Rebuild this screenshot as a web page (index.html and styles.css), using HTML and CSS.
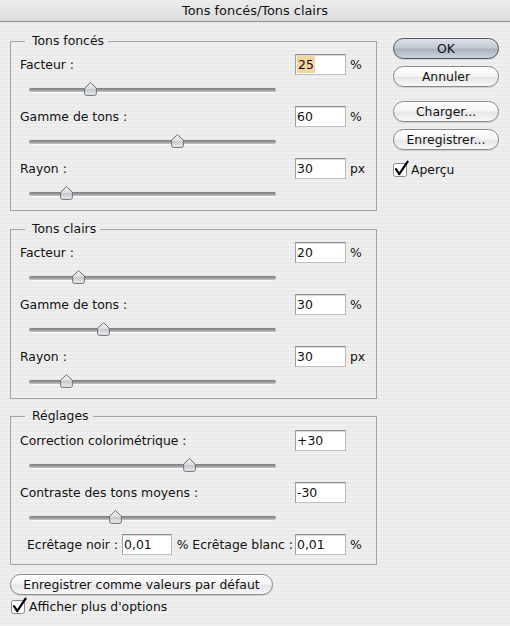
FILE: index.html
```html
<!DOCTYPE html>
<html lang="fr">
<head>
<meta charset="utf-8">
<title>Tons foncés/Tons clairs</title>
<link rel="stylesheet" href="styles.css">
</head>
<body>
<svg class="defs" width="0" height="0" aria-hidden="true">
  <defs>
    <linearGradient id="thumbGrad" x1="0" y1="0" x2="0" y2="1">
      <stop offset="0" stop-color="#fbfbfb"/>
      <stop offset="0.45" stop-color="#dedede"/>
      <stop offset="0.55" stop-color="#c4c9d1"/>
      <stop offset="1" stop-color="#eef0f3"/>
    </linearGradient>
  </defs>
</svg>
<div class="window">
  <div class="titlebar">Tons foncés/Tons clairs</div>
  <div class="content">
    <div class="main">
      <fieldset class="group">
        <legend>Tons foncés</legend>
        <div class="row"><span class="lbl">Facteur :</span><span class="field"><span class="sel">25</span></span><span class="unit">%</span></div>
        <div class="slider"><div class="track"></div><svg class="thumb" style="left:25%" viewBox="0 0 13 14" width="13" height="14"><path d="M6.5 0.7 L12.4 6.2 V11.4 Q12.4 13.4 10.4 13.4 H2.6 Q0.6 13.4 0.6 11.4 V6.2 Z"/></svg></div>
        <div class="row"><span class="lbl">Gamme de tons :</span><span class="field">60</span><span class="unit">%</span></div>
        <div class="slider"><div class="track"></div><svg class="thumb" style="left:60%" viewBox="0 0 13 14" width="13" height="14"><path d="M6.5 0.7 L12.4 6.2 V11.4 Q12.4 13.4 10.4 13.4 H2.6 Q0.6 13.4 0.6 11.4 V6.2 Z"/></svg></div>
        <div class="row"><span class="lbl">Rayon :</span><span class="field">30</span><span class="unit">px</span></div>
        <div class="slider"><div class="track"></div><svg class="thumb" style="left:15%" viewBox="0 0 13 14" width="13" height="14"><path d="M6.5 0.7 L12.4 6.2 V11.4 Q12.4 13.4 10.4 13.4 H2.6 Q0.6 13.4 0.6 11.4 V6.2 Z"/></svg></div>
      </fieldset>

      <fieldset class="group">
        <legend>Tons clairs</legend>
        <div class="row"><span class="lbl">Facteur :</span><span class="field">20</span><span class="unit">%</span></div>
        <div class="slider"><div class="track"></div><svg class="thumb" style="left:20%" viewBox="0 0 13 14" width="13" height="14"><path d="M6.5 0.7 L12.4 6.2 V11.4 Q12.4 13.4 10.4 13.4 H2.6 Q0.6 13.4 0.6 11.4 V6.2 Z"/></svg></div>
        <div class="row"><span class="lbl">Gamme de tons :</span><span class="field">30</span><span class="unit">%</span></div>
        <div class="slider"><div class="track"></div><svg class="thumb" style="left:30%" viewBox="0 0 13 14" width="13" height="14"><path d="M6.5 0.7 L12.4 6.2 V11.4 Q12.4 13.4 10.4 13.4 H2.6 Q0.6 13.4 0.6 11.4 V6.2 Z"/></svg></div>
        <div class="row"><span class="lbl">Rayon :</span><span class="field">30</span><span class="unit">px</span></div>
        <div class="slider"><div class="track"></div><svg class="thumb" style="left:15%" viewBox="0 0 13 14" width="13" height="14"><path d="M6.5 0.7 L12.4 6.2 V11.4 Q12.4 13.4 10.4 13.4 H2.6 Q0.6 13.4 0.6 11.4 V6.2 Z"/></svg></div>
      </fieldset>

      <fieldset class="group group-last">
        <legend>Réglages</legend>
        <div class="row"><span class="lbl">Correction colorimétrique :</span><span class="field">+30</span><span class="unit"></span></div>
        <div class="slider"><div class="track"></div><svg class="thumb" style="left:65%" viewBox="0 0 13 14" width="13" height="14"><path d="M6.5 0.7 L12.4 6.2 V11.4 Q12.4 13.4 10.4 13.4 H2.6 Q0.6 13.4 0.6 11.4 V6.2 Z"/></svg></div>
        <div class="row"><span class="lbl">Contraste des tons moyens :</span><span class="field">-30</span><span class="unit"></span></div>
        <div class="slider"><div class="track"></div><svg class="thumb" style="left:35%" viewBox="0 0 13 14" width="13" height="14"><path d="M6.5 0.7 L12.4 6.2 V11.4 Q12.4 13.4 10.4 13.4 H2.6 Q0.6 13.4 0.6 11.4 V6.2 Z"/></svg></div>
        <div class="cliprow">
          <span class="clip1">Ecrêtage noir :</span>
          <span class="field field-sm">0,01</span>
          <span class="clip2">% Ecrêtage blanc :</span>
          <span class="field">0,01</span>
          <span class="unit">%</span>
        </div>
      </fieldset>

      <div class="btn btn-wide">Enregistrer comme valeurs par défaut</div>
      <label class="check check-bottom">
        <svg viewBox="0 0 16 16" width="16" height="16"><rect x="0.5" y="2.5" width="13" height="13" rx="2"/><path d="M3 8.2 L6.2 13.2 L14.6 0.6"/></svg>
        <span>Afficher plus d'options</span>
      </label>
    </div>

    <div class="side">
      <div class="btn btn-default">OK</div>
      <div class="btn btn-cancel">Annuler</div>
      <div class="btn btn-load">Charger...</div>
      <div class="btn btn-save">Enregistrer...</div>
      <label class="check check-side">
        <svg viewBox="0 0 16 16" width="16" height="16"><rect x="0.5" y="2.5" width="13" height="13" rx="2"/><path d="M3 8.2 L6.2 13.2 L14.6 0.6"/></svg>
        <span>Aperçu</span>
      </label>
    </div>
  </div>
</div>
</body>
</html>
```

FILE: styles.css
```css
* { box-sizing: border-box; }

html, body {
  margin: 0;
  padding: 0;
}

body {
  width: 510px;
  height: 626px;
  overflow: hidden;
  font-family: "DejaVu Sans", "Liberation Sans", sans-serif;
  font-size: 12.4px;
  color: #111;
  background: repeating-linear-gradient(to bottom, #efefef 0, #efefef 2px, #eaeaea 2px, #eaeaea 4px);
}

.defs {
  position: absolute;
  width: 0;
  height: 0;
}

.window {
  width: 510px;
  height: 626px;
}

.titlebar {
  height: 22px;
  line-height: 21px;
  text-align: center;
  font-size: 12.9px;
  border-bottom: 1px solid #8e8e8e;
  background: linear-gradient(to bottom, #ededed, #dcdcdc);
}

.content {
  display: flex;
  padding: 11px 0 0 10px;
}

.main {
  width: 367px;
  display: flex;
  flex-direction: column;
}

.group {
  margin: 0 0 10px 0;
  padding: 5px 0 0 0;
  border: 1px solid #a4a4a4;
  min-inline-size: 0;
  width: 367px;
}

.group + .group { margin-bottom: 9px; }

.group-last {
  padding: 6px 0 9px 0;
  margin-bottom: 9px;
}

.group legend {
  line-height: 16px;
  padding: 0 4px 0 7px;
  margin-left: 14px;
}

.row {
  display: grid;
  grid-template-columns: 1fr 51px 30px;
  align-items: center;
  height: 21px;
  padding-left: 9px;
}

.field {
  display: flex;
  align-items: center;
  height: 21px;
  width: 51px;
  padding-left: 1px;
  background: #fff;
  border: 1px solid;
  border-color: #8a8a8a #b8b8b8 #c2c2c2 #a0a0a0;
  box-shadow: inset 0 1px 0 #dcdcdc;
}

.field-sm { width: 50px; }

.sel {
  background: #f6d5a1;
  height: 17px;
  line-height: 17px;
  padding: 0 1px;
}

.unit {
  padding-left: 4px;
}

.slider {
  position: relative;
  width: 247px;
  height: 31px;
  margin-left: 18px;
  padding-top: 13px;
}

.track {
  height: 4px;
  border-radius: 2px;
  background: linear-gradient(to bottom, #7a7a7a, #9a9a9a 50%, #c4c4c4);
  box-shadow: 0 1px 0 #f8f8f8;
}

.thumb {
  position: absolute;
  top: 7px;
  margin-left: -6.5px;
  overflow: visible;
}

.thumb path {
  fill: url(#thumbGrad);
  stroke: #6f6f6f;
  stroke-width: 1;
}

.cliprow {
  display: grid;
  grid-template-columns: auto 50px 1fr 51px 30px;
  align-items: center;
  height: 21px;
  padding-left: 16px;
}

.clip1 { padding-right: 4px; }

.clip2 {
  text-align: right;
  padding-right: 2px;
  white-space: nowrap;
}

.btn {
  display: flex;
  align-items: center;
  justify-content: center;
  height: 21px;
  border: 1px solid #8a8a8a;
  border-radius: 11px;
  background: linear-gradient(to bottom, #ffffff 0%, #f6f6f6 45%, #e7e7e7 55%, #f7f7f7 100%);
  box-shadow: 0 1px 1px rgba(0, 0, 0, 0.12);
  white-space: nowrap;
}

.btn-wide {
  width: 263px;
}

.side {
  width: 106px;
  margin-left: 16px;
  padding-top: 5px;
  display: flex;
  flex-direction: column;
}

.btn-default {
  border-color: #4f555d;
  background: linear-gradient(to bottom, #dde2e8 0%, #c2cad4 45%, #a9b3c0 55%, #cdd4dd 100%);
}

.btn-cancel { margin-top: 7px; }
.btn-load { margin-top: 14px; }
.btn-save { margin-top: 7px; }

.check {
  display: flex;
  align-items: center;
  gap: 2px;
  height: 16px;
}

.check svg {
  overflow: visible;
  flex: none;
}

.check rect {
  fill: #fff;
  stroke: #8a8a8a;
  stroke-width: 1;
}

.check path {
  fill: none;
  stroke: #000;
  stroke-width: 2.2;
  stroke-linecap: round;
  stroke-linejoin: round;
}

.check-side { margin-top: 11px; }

.check-bottom {
  margin-top: 3px;
  padding-left: 1px;
}
```
